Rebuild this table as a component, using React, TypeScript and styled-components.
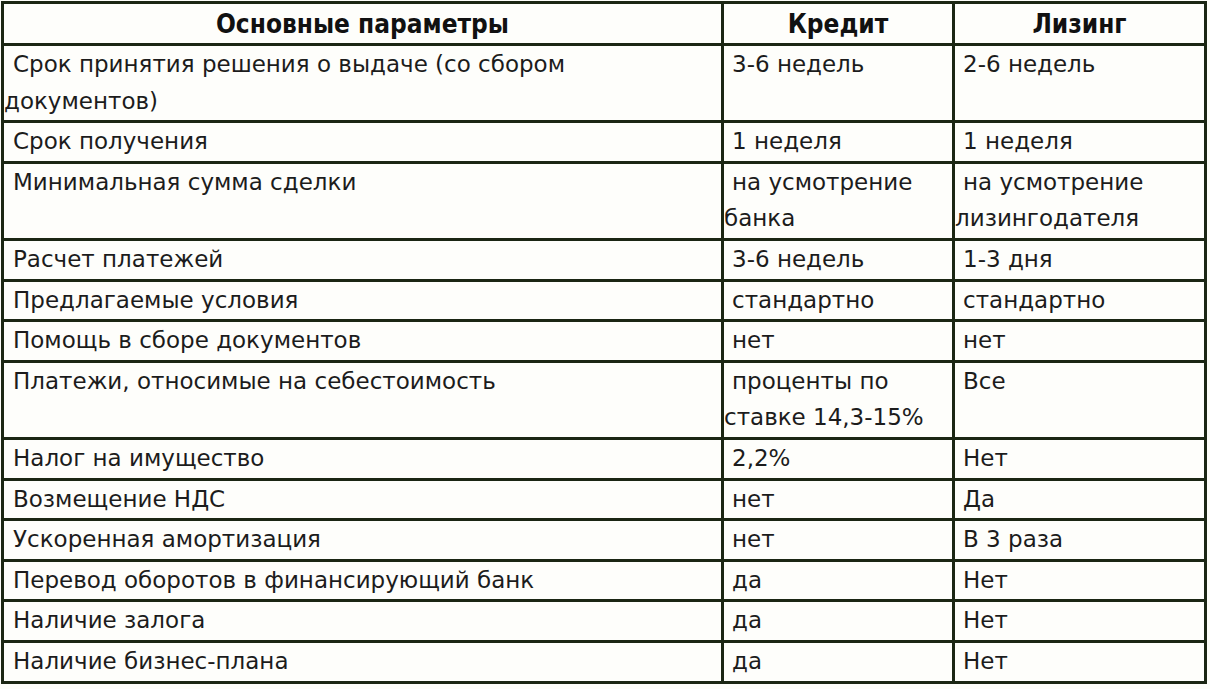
import { createGlobalStyle, styled } from "styled-components";

const GlobalStyle = createGlobalStyle`
  html, body {
    margin: 0;
    padding: 0;
    background: #fdfdf9;
  }
  body {
    font-family: "DejaVu Sans", Verdana, sans-serif;
    color: #141414;
  }
`;

type Row = [string, string, string];

const rows: Row[] = [
  ["Срок принятия решения о выдаче (со сбором документов)", "3-6 недель", "2-6 недель"],
  ["Срок получения", "1 неделя", "1 неделя"],
  ["Минимальная сумма сделки", "на усмотрение банка", "на усмотрение лизингодателя"],
  ["Расчет платежей", "3-6 недель", "1-3 дня"],
  ["Предлагаемые условия", "стандартно", "стандартно"],
  ["Помощь в сборе документов", "нет", "нет"],
  ["Платежи, относимые на себестоимость", "проценты по ставке 14,3-15%", "Все"],
  ["Налог на имущество", "2,2%", "Нет"],
  ["Возмещение НДС", "нет", "Да"],
  ["Ускоренная амортизация", "нет", "В 3 раза"],
  ["Перевод оборотов в финансирующий банк", "да", "Нет"],
  ["Наличие залога", "да", "Нет"],
  ["Наличие бизнес-плана", "да", "Нет"],
];

const App = (): JSX.Element => {
  return (
    <>
      <GlobalStyle />
      <Page>
        <Table>
          <colgroup>
            <col style={{ width: 720 }} />
            <col style={{ width: 231 }} />
            <col style={{ width: 252 }} />
          </colgroup>
          <thead>
            <tr>
              <HeadCell>Основные параметры</HeadCell>
              <HeadCell>Кредит</HeadCell>
              <HeadCell>Лизинг</HeadCell>
            </tr>
          </thead>
          <tbody>
            {rows.map((row, index) => (
              <tr key={index}>
                {row.map((text, i) => (
                  <Cell key={i} $first={i === 0}>
                    {text}
                  </Cell>
                ))}
              </tr>
            ))}
          </tbody>
        </Table>
      </Page>
    </>
  );
};

export default App;

const Page = styled.div`
  padding: 1px 0 0 1px;
  width: 1210px;
  height: 689px;
  box-sizing: border-box;
`;

const Table = styled.table`
  border-collapse: collapse;
  table-layout: fixed;
  width: 1206px;
  background: #fefefb;
`;

const HeadCell = styled.th`
  border: 3px solid #1b2613;
  height: 39px;
  padding: 0;
  font-family: "DejaVu Sans Condensed", "DejaVu Sans", sans-serif;
  font-stretch: condensed;
  font-weight: bold;
  font-size: 26px;
  color: #111;
  text-align: center;
  vertical-align: middle;
`;

const Cell = styled.td<{ $first?: boolean }>`
  border: 3px solid #1b2613;
  padding: 0 2px 1px 0;
  text-indent: ${(p) => (p.$first ? "9px" : "8px")};
  font-size: 23px;
  line-height: 36.6px;
  vertical-align: top;
  color: #1c1c1c;
  overflow: hidden;
`;
